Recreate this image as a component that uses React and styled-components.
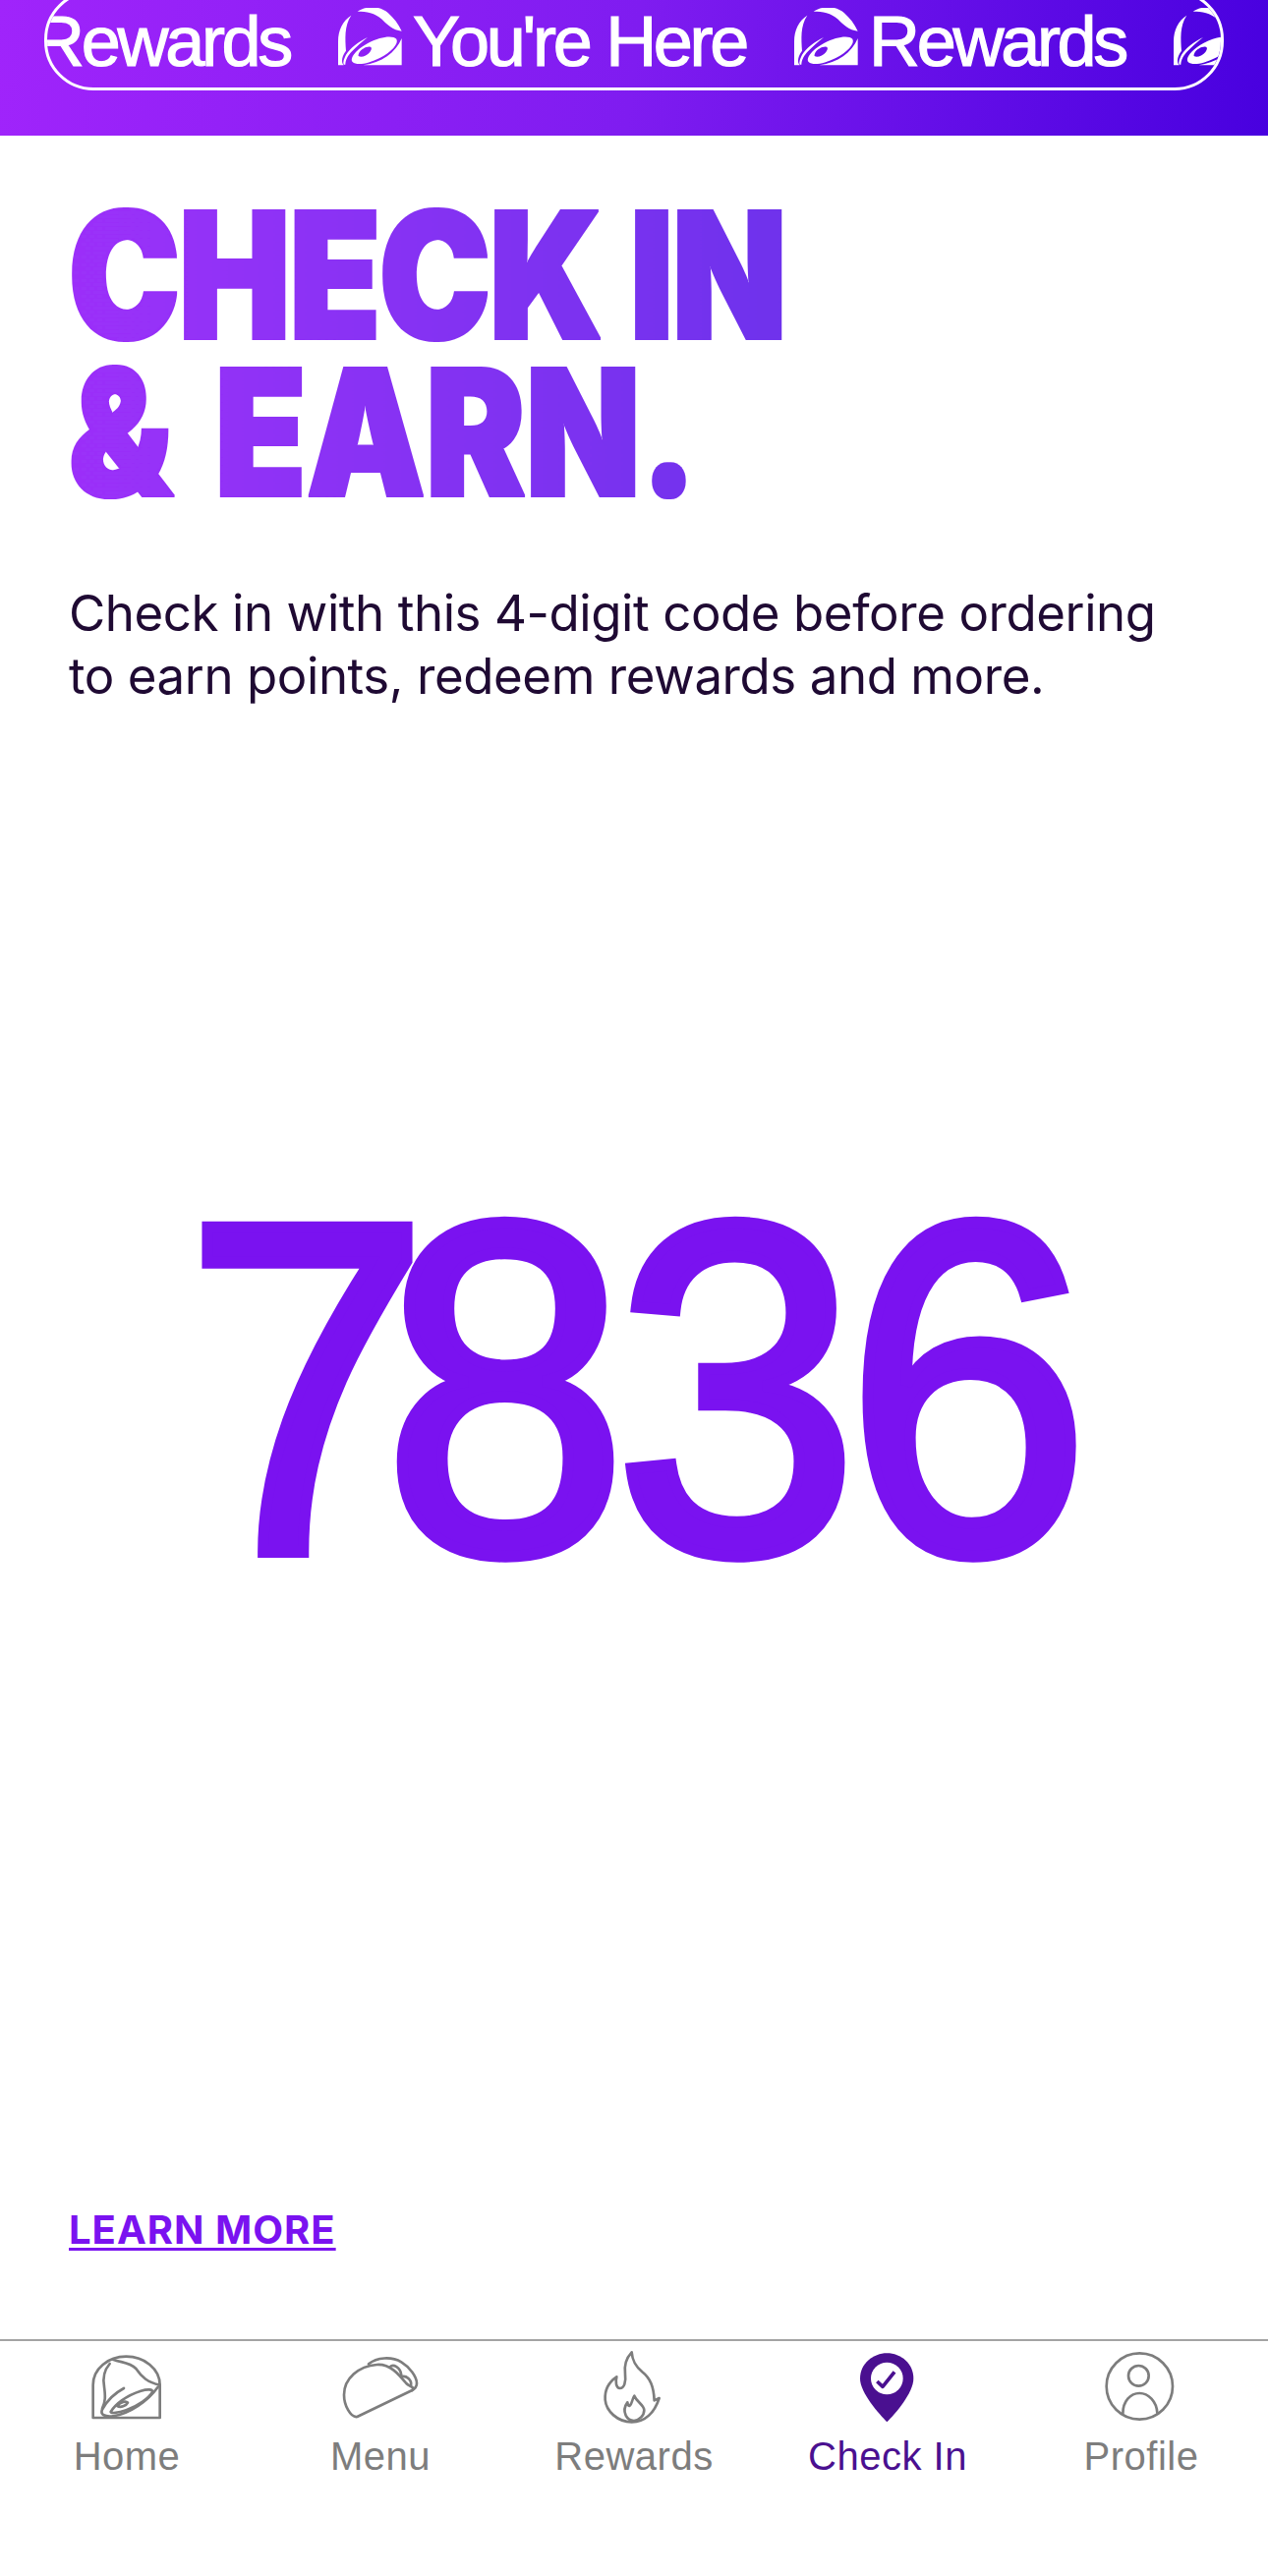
import React from "react";
import styled, { createGlobalStyle } from "styled-components";

const GlobalStyle = createGlobalStyle`
  html, body {
    margin: 0;
    padding: 0;
    background: #fff;
  }
`;

const Page = styled.div`
  width: 1290px;
  min-height: 2621px;
  display: flex;
  flex-direction: column;
  background: #fff;
`;

const PromoBar = styled.div`
  height: 138px;
  flex: none;
  overflow: hidden;
  padding: 0 45px;
  box-sizing: border-box;
  background: linear-gradient(97deg, #a024fb 0%, #7f1cf0 50%, #4800df 100%);
`;

const Pill = styled.div`
  height: 102px;
  margin-top: -10px;
  box-sizing: border-box;
  border: 3px solid #fff;
  border-radius: 50px;
  overflow: hidden;
`;

const Marquee = styled.div`
  display: flex;
  width: max-content;
  gap: 49px;
  margin-left: -14px;
  padding-top: 13px;
`;

const PromoItem = styled.div`
  display: flex;
  gap: 11px;
  align-items: flex-start;
`;

const PromoText = styled.span`
  font-family: "Liberation Sans", Arial, sans-serif;
  font-size: 72px;
  line-height: 72px;
  letter-spacing: -3.3px;
  color: #fff;
  white-space: nowrap;
  -webkit-text-stroke: 1.2px #fff;
`;

const LogoSvg = styled.svg`
  width: 65px;
  height: 59px;
  margin-top: 2px;
  flex: none;
`;

const Main = styled.main`
  flex: 1;
  display: flex;
  flex-direction: column;
  padding: 0 70px 87px;
`;

const Heading = styled.h1`
  width: 900px;
  margin: 62px 0 0;
  font-family: Inter, "Liberation Sans", sans-serif;
  font-weight: 900;
  font-size: 180px;
  line-height: 160px;
  transform: scaleX(0.84);
  transform-origin: left center;
  background: linear-gradient(90deg, #9b2ff9 0%, #6c30eb 100%);
  -webkit-background-clip: text;
  background-clip: text;
  color: transparent;
  filter: url(#heading-weight);
`;

const HeadingLine = styled.span`
  display: block;
  letter-spacing: ${(p) => p.$spacing}px;
  word-spacing: ${(p) => p.$words || 0}px;
`;

const Intro = styled.p`
  margin: 72px 0 0;
  font-family: Inter, "Liberation Sans", sans-serif;
  font-size: 51px;
  line-height: 64px;
  letter-spacing: -0.43px;
  color: #1f0a33;
`;

const Code = styled.div`
  margin: 453px 6px 0 0;
  align-self: center;
  font-family: "Liberation Sans", Arial, sans-serif;
  font-size: 480px;
  line-height: 480px;
  letter-spacing: -14px;
  color: #7a12f0;
  -webkit-text-stroke: 12px #7a12f0;
  transform: scaleX(0.93);
`;

const TightDigit = styled.span`
  letter-spacing: -50px;
`;

const LearnMore = styled.a`
  margin-top: auto;
  align-self: flex-start;
  font-family: Inter, "Liberation Sans", sans-serif;
  font-weight: 700;
  font-size: 40px;
  line-height: 48px;
  letter-spacing: 1px;
  color: #7a12f0;
  text-decoration: underline;
  text-decoration-thickness: 3px;
  text-underline-offset: 4px;
`;

const Nav = styled.nav`
  flex: none;
  height: 241px;
  box-sizing: border-box;
  border-top: 2px solid #a3a3a3;
  padding-top: 3px;
  display: grid;
  grid-template-columns: repeat(5, 1fr);
`;

const NavItem = styled.div`
  display: flex;
  flex-direction: column;
  align-items: center;
  color: ${(p) => (p.$active ? "#4a1090" : "#7d7d7d")};
`;

const NavIcon = styled.svg`
  width: 90px;
  height: 90px;
  flex: none;
  fill: none;
  stroke: currentColor;
  stroke-width: 8;
  stroke-linecap: round;
  stroke-linejoin: round;
`;

const NavLabel = styled.span`
  font-family: "Liberation Sans", Arial, sans-serif;
  font-size: 40px;
  line-height: 48px;
  letter-spacing: 0.5px;
`;

const HiddenDefs = styled.svg`
  position: absolute;
  width: 0;
  height: 0;
`;

const Logo = () => (
  <LogoSvg viewBox="38 25 195 177" fill="#fff">
    <path d="M97 36C125 18 165 18 190 40C208 56 222 74 232 96C205 92 190 78 172 60C150 40 125 36 97 36Z" />
    <path d="M78 48C52 65 38 92 38 128V200H55C46 190 50 172 62 156C60 120 56 80 78 48Z" />
    <path d="M128 115C100 128 75 148 62 168C56 180 52 190 55 198L60 198C60 185 68 170 80 158C95 142 112 127 128 115Z" />
    <path d="M232 118V200H115C170 192 214 162 232 118Z" />
    <path
      fillRule="evenodd"
      d="M82 190C72 178 95 150 130 132C168 112 205 108 216 120C224 134 200 160 165 178C130 196 94 202 82 190ZM100 172C108 178 125 172 135 160C140 152 142 146 136 144C124 142 108 152 102 162C100 166 99 170 100 172Z"
    />
  </LogoSvg>
);

const HomeIcon = () => (
  <NavIcon viewBox="252 75 270 270">
    <path d="M284 300V200C284 150 330 113 385 113C440 113 488 150 488 200V300Z" />
    <path d="M345 122C370 132 395 130 415 150C432 175 450 192 488 200" />
    <path d="M335 135C322 150 312 172 318 205C322 235 322 250 312 272" />
    <path d="M378 210C350 225 325 250 312 275C305 290 320 298 345 295C395 288 450 250 482 206" />
    <path d="M338 282C350 260 385 232 430 218C450 212 468 212 465 222C455 240 420 265 385 277C360 285 340 288 338 282Z" />
    <path d="M358 264C368 250 385 248 390 254C385 264 368 270 358 264Z" />
  </NavIcon>
);

const TacoIcon = () => (
  <NavIcon viewBox="1026 75 270 270">
    <path d="M1090 297L1258 216C1270 208 1250 205 1240 195C1215 165 1190 135 1150 138C1095 142 1050 180 1050 230C1050 262 1070 300 1090 297Z" />
    <path d="M1125 136C1150 115 1195 112 1225 130C1250 145 1272 175 1272 195C1272 205 1265 212 1258 216" />
    <path d="M1190 145C1200 135 1222 145 1225 170" />
    <path d="M1225 175C1240 170 1258 185 1254 202" />
  </NavIcon>
);

const FlameIcon = () => (
  <NavIcon viewBox="0 0 270 270">
    <path d="M128 25C112 42 104 62 108 92C111 116 105 135 92 135C80 135 78 115 82 100C60 115 45 140 47 170C50 205 85 238 128 238C170 238 198 208 212 165L197 172C195 130 185 105 160 85C138 66 130 50 128 25Z" />
    <path d="M136 158C128 170 130 182 122 188C116 190 116 182 115 178C106 190 104 205 110 218C116 230 125 234 135 234C152 232 166 218 166 202C166 186 144 178 136 158Z" />
  </NavIcon>
);

const PinIcon = () => (
  <NavIcon viewBox="-6 0 270 270">
    <path
      fill="currentColor"
      stroke="none"
      d="M127 28C85 28 45 60 45 105C45 150 105 215 127 238C150 215 208 150 208 105C208 60 170 28 127 28Z"
    />
    <circle cx="127" cy="105" r="49" fill="#fff" stroke="none" />
    <path d="M97 114L114 130L150 85" strokeWidth="11" strokeLinecap="butt" />
  </NavIcon>
);

const ProfileIcon = () => (
  <NavIcon viewBox="3 0 270 270">
    <circle cx="133" cy="129" r="101" />
    <circle cx="130" cy="97" r="31" />
    <path d="M82 212C82 175 105 150 133 150C160 150 185 175 187 210" />
  </NavIcon>
);

const promos = ["Rewards", "You're Here", "Rewards", ""];

const tabs = [
  { label: "Home", Icon: HomeIcon },
  { label: "Menu", Icon: TacoIcon },
  { label: "Rewards", Icon: FlameIcon },
  { label: "Check In", Icon: PinIcon, active: true },
  { label: "Profile", Icon: ProfileIcon },
];

const App = () => {
  return (
    <Page>
      <GlobalStyle />
      <HiddenDefs aria-hidden="true">
        <filter id="heading-weight" x="-2%" y="-2%" width="104%" height="104%">
          <feMorphology operator="dilate" radius="2 1" />
        </filter>
      </HiddenDefs>
      <PromoBar>
        <Pill>
          <Marquee>
            {promos.map((text, i) => (
              <PromoItem key={i}>
                {i > 0 && <Logo />}
                {text && <PromoText>{text}</PromoText>}
              </PromoItem>
            ))}
          </Marquee>
        </Pill>
      </PromoBar>
      <Main>
        <Heading>
          <HeadingLine $spacing={-1.2}>CHECK IN</HeadingLine>
          <HeadingLine $spacing={1} $words={14}>
            &amp; EARN.
          </HeadingLine>
        </Heading>
        <Intro>
          Check in with this 4-digit code before ordering
          <br />
          to earn points, redeem rewards and more.
        </Intro>
        <Code>
          <TightDigit>7</TightDigit>836
        </Code>
        <LearnMore>LEARN MORE</LearnMore>
      </Main>
      <Nav>
        {tabs.map(({ label, Icon, active }) => (
          <NavItem key={label} $active={active}>
            <Icon />
            <NavLabel>{label}</NavLabel>
          </NavItem>
        ))}
      </Nav>
    </Page>
  );
};

export default App;
